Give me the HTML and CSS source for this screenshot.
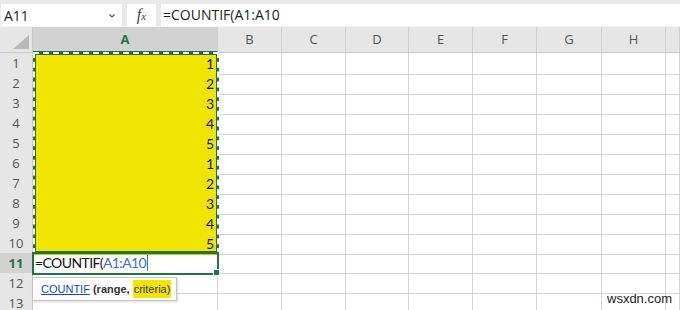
FILE: index.html
```html
<!DOCTYPE html>
<html>
<head>
<meta charset="utf-8">
<link rel="stylesheet" href="styles.css">
</head>
<body>
<div class="app">
  <div class="toolbar">
    <div class="namebox"><span>A11</span><svg class="chev" width="8" height="6" viewBox="0 0 8 6"><path d="M1.5 1.5 L4 4 L6.5 1.5" fill="none" stroke="#555" stroke-width="1.2"/></svg></div>
    <div class="fxbtn"><span class="fx">f<span class="fxx">x</span></span></div>
    <div class="formula">=COUNTIF(A1:A10</div>
  </div>
  <div class="sheet">
    <div class="row head">
      <div class="corner"><svg width="16" height="14" viewBox="0 0 16 14"><path d="M16 0 L16 14 L0 14 Z" fill="#b9b9b9"/></svg></div>
      <div class="ch sel">A</div><div class="ch">B</div><div class="ch">C</div><div class="ch">D</div><div class="ch">E</div><div class="ch">F</div><div class="ch">G</div><div class="ch">H</div><div class="ch"></div>
    </div>
    <div class="row"><div class="rh">1</div><div class="c y">1</div><div class="c"></div><div class="c"></div><div class="c"></div><div class="c"></div><div class="c"></div><div class="c"></div><div class="c"></div><div class="c"></div></div>
    <div class="row"><div class="rh">2</div><div class="c y">2</div><div class="c"></div><div class="c"></div><div class="c"></div><div class="c"></div><div class="c"></div><div class="c"></div><div class="c"></div><div class="c"></div></div>
    <div class="row"><div class="rh">3</div><div class="c y">3</div><div class="c"></div><div class="c"></div><div class="c"></div><div class="c"></div><div class="c"></div><div class="c"></div><div class="c"></div><div class="c"></div></div>
    <div class="row"><div class="rh">4</div><div class="c y">4</div><div class="c"></div><div class="c"></div><div class="c"></div><div class="c"></div><div class="c"></div><div class="c"></div><div class="c"></div><div class="c"></div></div>
    <div class="row"><div class="rh">5</div><div class="c y">5</div><div class="c"></div><div class="c"></div><div class="c"></div><div class="c"></div><div class="c"></div><div class="c"></div><div class="c"></div><div class="c"></div></div>
    <div class="row"><div class="rh">6</div><div class="c y">1</div><div class="c"></div><div class="c"></div><div class="c"></div><div class="c"></div><div class="c"></div><div class="c"></div><div class="c"></div><div class="c"></div></div>
    <div class="row"><div class="rh">7</div><div class="c y">2</div><div class="c"></div><div class="c"></div><div class="c"></div><div class="c"></div><div class="c"></div><div class="c"></div><div class="c"></div><div class="c"></div></div>
    <div class="row"><div class="rh">8</div><div class="c y">3</div><div class="c"></div><div class="c"></div><div class="c"></div><div class="c"></div><div class="c"></div><div class="c"></div><div class="c"></div><div class="c"></div></div>
    <div class="row"><div class="rh">9</div><div class="c y">4</div><div class="c"></div><div class="c"></div><div class="c"></div><div class="c"></div><div class="c"></div><div class="c"></div><div class="c"></div><div class="c"></div></div>
    <div class="row"><div class="rh">10</div><div class="c y">5</div><div class="c"></div><div class="c"></div><div class="c"></div><div class="c"></div><div class="c"></div><div class="c"></div><div class="c"></div><div class="c"></div></div>
    <div class="row"><div class="rh active">11</div><div class="c edit">=COUNTIF(<span class="ref">A1:A10</span><span class="caret"></span></div><div class="c"></div><div class="c"></div><div class="c"></div><div class="c"></div><div class="c"></div><div class="c"></div><div class="c"></div><div class="c"></div></div>
    <div class="row"><div class="rh">12</div><div class="c"></div><div class="c"></div><div class="c"></div><div class="c"></div><div class="c"></div><div class="c"></div><div class="c"></div><div class="c"></div><div class="c"></div></div>
    <div class="row"><div class="rh">13</div><div class="c"></div><div class="c"></div><div class="c"></div><div class="c"></div><div class="c"></div><div class="c"></div><div class="c"></div><div class="c"></div><div class="c"></div></div>
    <div class="ants"></div>
    <div class="tip"><a class="fn">COUNTIF</a> <b>(range,</b> <span class="cur">criteria)</span></div>
    <div class="wm">wsxdn.com</div>
  </div>
</div>
</body>
</html>
```
FILE: styles.css
```css
html, body { margin: 0; padding: 0; background: #fff; }
.app { width: 680px; height: 310px; overflow: hidden; font-family: "Open Sans", "Noto Sans", sans-serif; }
.toolbar { height: 27px; background: #e9e9e9; display: flex; align-items: flex-start; padding-top: 4px; box-sizing: border-box; border-bottom: 1px solid #f4f4f4; }
.namebox { margin-left: 1px; width: 121px; height: 22px; background: #fff; display: flex; align-items: center; justify-content: space-between; padding: 0 6px 0 3px; box-sizing: border-box; font-size: 14px; color: #222; }
.chev { margin-top: 1px; }
.fxbtn { margin-left: 5px; width: 29px; height: 22px; background: #fff; display: flex; align-items: center; justify-content: center; }
.fx { font-family: "Liberation Serif", serif; font-style: italic; font-size: 16px; color: #444; line-height: 1; }
.fxx { font-size: 11px; }
.formula { margin-left: 5px; flex: 1; height: 22px; background: #fff; font-size: 14px; color: #222; line-height: 22px; padding-left: 2px; }
.sheet { position: relative; }
.row { display: grid; grid-template-columns: 33px 185px 64px 64px 63px 64px 64px 65px 64px 1fr; height: 20px; }
.row.head { height: 26px; }
.row > div { box-sizing: border-box; border-right: 1px solid #d4d4d4; border-bottom: 1px solid #d4d4d4; }
.corner { background: #e6e6e6; display: flex; align-items: flex-end; justify-content: flex-end; padding: 0 3px 3px 0; border-right-color: #c8c8c8 !important; border-bottom-color: #c8c8c8 !important; }
.ch { background: #e6e6e6; text-align: center; font-size: 13px; color: #555; line-height: 25px; border-right-color: #cfcfcf !important; border-bottom-color: #c8c8c8 !important; }
.ch.sel { background: #d2d2d2; color: #217346; font-weight: bold; border-bottom: 2px solid #217346 !important; line-height: 24px; }
.rh { background: #e6e6e6; text-align: center; font-size: 13px; color: #555; line-height: 20px; border-right-color: #c8c8c8 !important; border-bottom-color: #d9d9d9 !important; }
.rh.active { background: #d2d2d2; color: #217346; font-weight: bold; }
.c { font-family: Lato, "Liberation Sans", sans-serif; font-size: 14px; color: #111; line-height: 21px; }
.c.y { background: #f0e400; border-bottom-color: #d3c900 !important; text-align: right; padding-right: 3px; }
.c.edit { position: relative; z-index: 2; outline: 2px solid #217346; outline-offset: -1px; padding-left: 2px; white-space: nowrap; line-height: 20px; letter-spacing: -0.6px; }
.c.edit::after { content: ""; position: absolute; right: -3px; bottom: -3px; width: 5px; height: 5px; background: #217346; border: 1px solid #fff; }
.ref { color: #3a6fd0; }
.caret { display: inline-block; width: 1px; height: 16px; background: #3a6fd0; vertical-align: -3px; margin-left: 1px; }
.ants { position: absolute; left: 33px; top: 25px; width: 186px; height: 202px; box-sizing: border-box; border: 3px solid #217346; }
.ants::before { content: ""; position: absolute; inset: -3px; border: 2px dashed #fff; }
.tip { position: absolute; left: 32px; top: 250px; width: 145px; height: 24px; box-sizing: border-box; background: #fff; border: 1px solid #c6c6c6; box-shadow: 1px 1px 2px rgba(0,0,0,0.15); font-family: "Liberation Sans", sans-serif; font-size: 11px; color: #333; line-height: 22px; padding-left: 8px; white-space: nowrap; z-index: 3; }
.fn { color: #1a3fd6; text-decoration: underline; }
.tip b { color: #333; }
.cur { background: #f2e600; padding: 3px 1px; }
.wm { position: absolute; left: 607px; top: 264px; font-family: "Liberation Sans", sans-serif; font-size: 13px; color: #222; }
```
